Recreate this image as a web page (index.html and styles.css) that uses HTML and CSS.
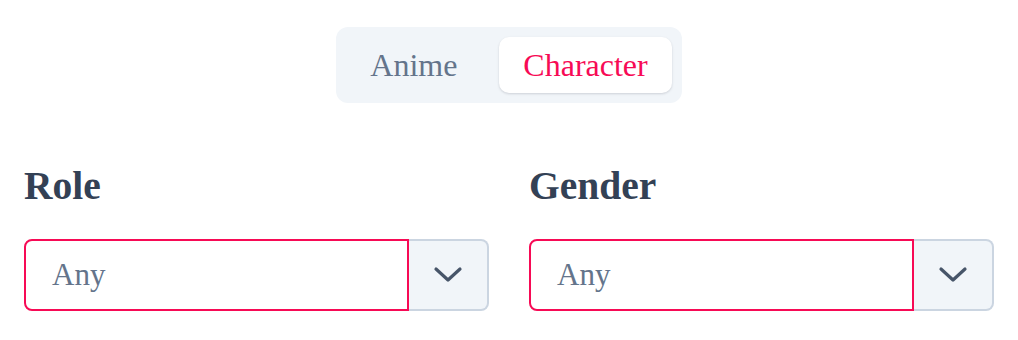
FILE: index.html
```html
<!DOCTYPE html>
<html>
<head>
<meta charset="utf-8">
<link rel="stylesheet" href="styles.css">
</head>
<body>
<div class="page">
  <div class="tabs-row">
    <div class="tabs">
      <button class="tab">Anime</button>
      <button class="tab active">Character</button>
    </div>
  </div>
  <div class="filters">
    <div class="field">
      <h2 class="label">Role</h2>
      <div class="select">
        <div class="select-value">Any</div>
        <div class="select-btn">
          <svg width="30" height="18" viewBox="0 0 30 18"><path d="M3 3 L15 14 L27 3" fill="none" stroke="#475569" stroke-width="3.2" stroke-linecap="round" stroke-linejoin="round"/></svg>
        </div>
      </div>
    </div>
    <div class="field">
      <h2 class="label">Gender</h2>
      <div class="select">
        <div class="select-value">Any</div>
        <div class="select-btn">
          <svg width="30" height="18" viewBox="0 0 30 18"><path d="M3 3 L15 14 L27 3" fill="none" stroke="#475569" stroke-width="3.2" stroke-linecap="round" stroke-linejoin="round"/></svg>
        </div>
      </div>
    </div>
  </div>
</div>
</body>
</html>
```
FILE: styles.css
```css
html, body {
  margin: 0;
  padding: 0;
  background: #ffffff;
}
.page {
  font-family: "Liberation Serif", "Times New Roman", serif;
  padding: 27px 24px 0 24px;
}
.tabs-row {
  display: flex;
  justify-content: center;
}
.tabs {
  display: flex;
  gap: 18px;
  background: #f1f5f9;
  border-radius: 12px;
  padding: 10px;
}
.tab {
  font-family: inherit;
  font-size: 32px;
  line-height: 56px;
  height: 56px;
  padding: 0 24px;
  border: none;
  background: transparent;
  color: #64748b;
  border-radius: 10px;
  cursor: pointer;
}
.tab.active {
  background: #ffffff;
  color: #f70a55;
  box-shadow: 0 1px 3px rgba(15, 23, 42, 0.10), 0 1px 2px rgba(15, 23, 42, 0.06);
}
.filters {
  display: grid;
  grid-template-columns: 465px 465px;
  column-gap: 40px;
  margin-top: 57px;
}
.label {
  margin: 0;
  font-size: 39.5px;
  line-height: 52px;
  font-weight: bold;
  color: #334155;
}
.select {
  margin-top: 27px;
  display: flex;
  height: 72px;
}
.select-value {
  flex: 1;
  border: 2px solid #f70a55;
  border-radius: 8px 0 0 8px;
  display: flex;
  align-items: center;
  padding-left: 26px;
  font-size: 31px;
  color: #64748b;
}
.select-btn {
  width: 78px;
  background: #f1f5f9;
  border: 2px solid #cbd5e1;
  border-left: none;
  border-radius: 0 8px 8px 0;
  display: flex;
  align-items: center;
  justify-content: center;
}
.select-btn svg {
  display: block;
}
```
